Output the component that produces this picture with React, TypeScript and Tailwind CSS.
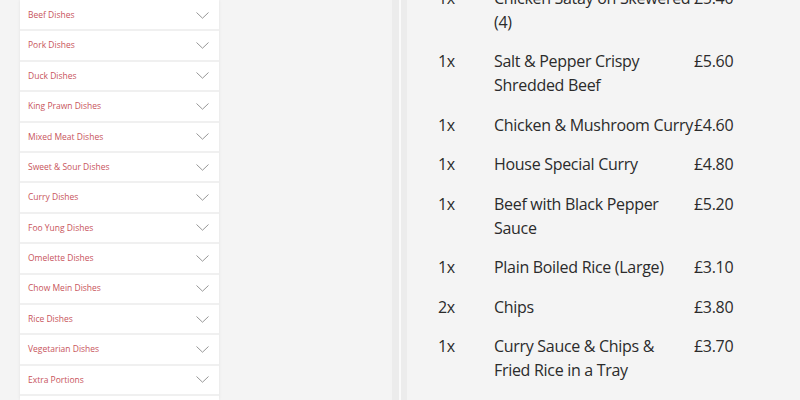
import React from "react";

const cats = [
  "Beef Dishes",
  "Pork Dishes",
  "Duck Dishes",
  "King Prawn Dishes",
  "Mixed Meat Dishes",
  "Sweet & Sour Dishes",
  "Curry Dishes",
  "Foo Yung Dishes",
  "Omelette Dishes",
  "Chow Mein Dishes",
  "Rice Dishes",
  "Vegetarian Dishes",
  "Extra Portions",
  "Drinks",
];

const items: [string, string, string][] = [
  ["1x", "Chicken Satay on Skewered (4)", "£5.40"],
  ["1x", "Salt & Pepper Crispy Shredded Beef", "£5.60"],
  ["1x", "Chicken & Mushroom Curry", "£4.60"],
  ["1x", "House Special Curry", "£4.80"],
  ["1x", "Beef with Black Pepper Sauce", "£5.20"],
  ["1x", "Plain Boiled Rice (Large)", "£3.10"],
  ["2x", "Chips", "£3.80"],
  ["1x", "Curry Sauce & Chips & Fried Rice in a Tray", "£3.70"],
];

function Chevron() {
  return (
    <svg width="13" height="7" viewBox="0 0 13 7" fill="none">
      <path d="M0.5 0.5 L6.5 6.2 L12.5 0.5" stroke="#8a8a8a" strokeWidth="0.9" />
    </svg>
  );
}

export default function App() {
  return (
    <div
      className="w-[800px] h-[400px] overflow-hidden bg-[#f4f4f4] flex"
      style={{ fontFamily: "'Open Sans', sans-serif" }}
    >
      <div className="w-[20px] shrink-0" />
      <div className="w-[199px] shrink-0 flex flex-col pt-[1px] bg-white shadow-[0_0_3px_rgba(0,0,0,0.08)]">
        {cats.map((c) => (
          <div
            key={c}
            className="h-[30.4px] shrink-0 flex items-center justify-between pl-[8px] pr-[10px] border-b-[2px] border-[#f0f0f0]"
          >
            <span className="text-[8.5px] text-[#c8545c] leading-none">{c}</span>
            <Chevron />
          </div>
        ))}
      </div>
      <div className="w-[173px] shrink-0" />
      <div className="w-[7px] shrink-0 bg-[#ececec]" />
      <div className="w-[2px] shrink-0 bg-[#fafafa]" />
      <div className="w-[6px] shrink-0 bg-[#ececec]" />
      <div className="flex-1 pl-[31px]">
        <div className="-mt-[22px] flex flex-col">
          {items.map(([q, n, p], i) => (
            <div
              key={i}
              className="flex py-[7.75px] text-[16px] tracking-[-0.3px] leading-[24px] text-[#2b2b2b]"
            >
              <div className="w-[56px] shrink-0">{q}</div>
              <div className="w-[200px] shrink-0">{n}</div>
              <div className="shrink-0">{p}</div>
            </div>
          ))}
        </div>
      </div>
    </div>
  );
}
